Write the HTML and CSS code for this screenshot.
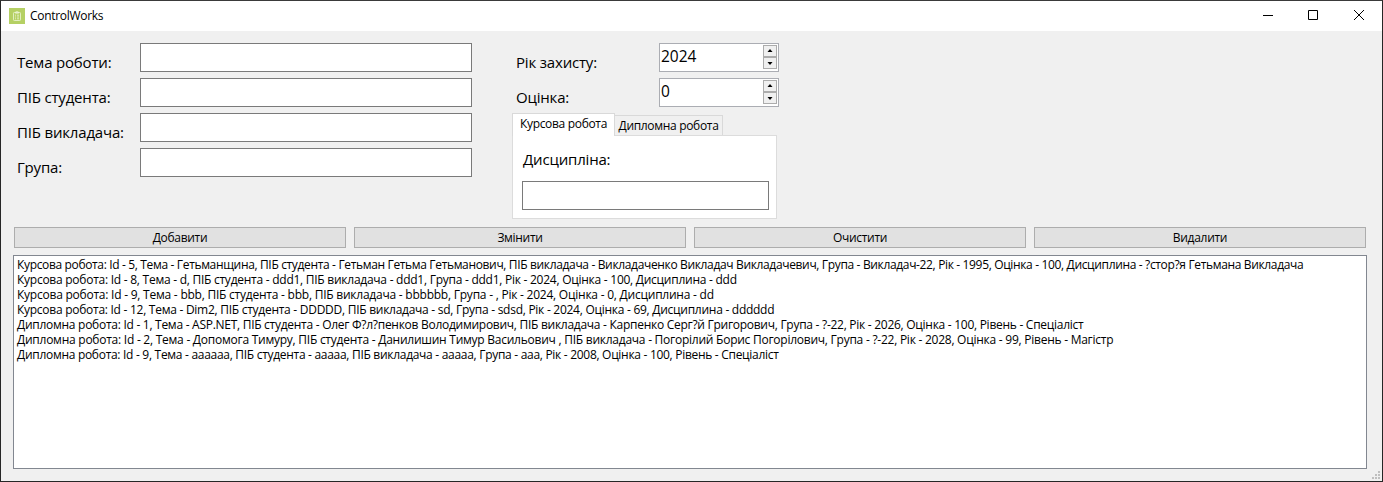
FILE: index.html
```html
<!DOCTYPE html>
<html lang="uk">
<head>
<meta charset="utf-8">
<title>ControlWorks</title>
<link rel="stylesheet" href="styles.css">
</head>
<body>
<div class="window">
  <header class="titlebar">
    <svg class="app-icon" width="16" height="16" viewBox="0 0 16 16" fill="none"><rect width="16" height="16" fill="#b5d064"/><rect x="4.5" y="4.5" width="7" height="8" rx=".8" stroke="#eef5d8" stroke-width=".8"/><path d="M6.5 5.2V4h.8l.7-.8.7.8h.8v1.2zM6 7.2h1M8 7.2h2M6 9h1M8 9h2M6 10.8h1M8 10.8h2" stroke="#eef5d8" stroke-width=".8"/></svg>
    <span class="title">ControlWorks</span>
    <svg class="window-controls" width="102" height="12" viewBox="0 0 102 12" fill="none" stroke="#000"><path d="M0 5.5h10M45.5.5h9v9h-9zM91 0l10 10M101 0L91 10"/></svg>
  </header>
  <main class="content">
    <section class="form">
      <div class="fields">
        <label class="field"><span class="label">Тема роботи:</span><input class="text-input"></label>
        <label class="field"><span class="label">ПІБ студента:</span><input class="text-input"></label>
        <label class="field"><span class="label">ПІБ викладача:</span><input class="text-input"></label>
        <label class="field"><span class="label">Група:</span><input class="text-input"></label>
      </div>
      <div class="details">
        <div class="field spin-field"><span class="label">Рік захисту:</span>
          <div class="spin"><span class="spin-value">2024</span><div class="spin-buttons"><svg class="spin-button" viewBox="0 0 12 10"><path d="M6 3l2.5 3h-5z"/></svg><svg class="spin-button" viewBox="0 0 12 10"><path d="M6 7l2.5-3h-5z"/></svg></div></div>
        </div>
        <div class="field spin-field"><span class="label">Оцінка:</span>
          <div class="spin"><span class="spin-value">0</span><div class="spin-buttons"><svg class="spin-button" viewBox="0 0 12 10"><path d="M6 3l2.5 3h-5z"/></svg><svg class="spin-button" viewBox="0 0 12 10"><path d="M6 7l2.5-3h-5z"/></svg></div></div>
        </div>
        <div class="tabs">
          <div class="tab-strip"><span class="tab active">Курсова робота</span><span class="tab">Дипломна робота</span></div>
          <div class="tab-panel"><span class="label">Дисципліна:</span><input class="text-input discipline"></div>
        </div>
      </div>
    </section>
    <div class="actions">
      <button class="action">Добавити</button><button class="action">Змінити</button><button class="action">Очистити</button><button class="action">Видалити</button>
    </div>
    <div class="list">
      <div class="row r1">Курсова робота: Id - 5, Тема - Гетьманщина, ПІБ студента - Гетьман Гетьма Гетьманович, ПІБ викладача - Викладаченко Викладач Викладачевич, Група - Викладач-22, Рік - 1995, Оцінка - 100, Дисциплина - ?стор?я Гетьмана Викладача</div>
      <div class="row r2">Курсова робота: Id - 8, Тема - d, ПІБ студента - ddd1, ПІБ викладача - ddd1, Група - ddd1, Рік - 2024, Оцінка - 100, Дисциплина - ddd</div>
      <div class="row r3">Курсова робота: Id - 9, Тема - bbb, ПІБ студента - bbb, ПІБ викладача - bbbbbb, Група - , Рік - 2024, Оцінка - 0, Дисциплина - dd</div>
      <div class="row r4">Курсова робота: Id - 12, Тема - Dim2, ПІБ студента - DDDDD, ПІБ викладача - sd, Група - sdsd, Рік - 2024, Оцінка - 69, Дисциплина - dddddd</div>
      <div class="row r5">Дипломна робота: Id - 1, Тема - ASP.NET, ПІБ студента - Олег Ф?л?пенков Володимирович, ПІБ викладача - Карпенко Серг?й Григорович, Група - ?-22, Рік - 2026, Оцінка - 100, Рівень - Спеціаліст</div>
      <div class="row r6">Дипломна робота: Id - 2, Тема - Допомога Тимуру, ПІБ студента - Данилишин Тимур Васильович , ПІБ викладача - Погорілий Борис Погорілович, Група - ?-22, Рік - 2028, Оцінка - 99, Рівень - Магістр</div>
      <div class="row r7">Дипломна робота: Id - 9, Тема - аааааа, ПІБ студента - ааааа, ПІБ викладача - ааааа, Група - ааа, Рік - 2008, Оцінка - 100, Рівень - Спеціаліст</div>
    </div>
  </main>
  <svg class="grip" width="8" height="8" fill="#bfbfbf"><path d="M6 0h2v2H6zM3 3h2v2H3zM6 3h2v2H6zM0 6h2v2H0zM3 6h2v2H3zM6 6h2v2H6z"/></svg>
</div>
</body>
</html>
```
FILE: styles.css
```css
* { box-sizing: border-box; }
body { margin: 0; font: 12px/15px "Open Sans", "Noto Sans", sans-serif; color: #000; }
.window { position: relative; width: 1383px; height: 482px; border: 1px solid #262626; border-top-color: #3a3a3a; background: #f0f0f0; overflow: hidden; }
.titlebar { display: flex; align-items: center; height: 30px; padding: 0 17px 0 8px; background: #fff; }
.title { margin: -1px 0 0 5px; letter-spacing: -0.3px; }
.window-controls { margin-left: auto; }
.content { padding: 12px 15px 0 12px; }
.form { display: flex; gap: 40px; height: 184px; }
.fields { display: flex; flex-direction: column; gap: 6px; }
.field { display: flex; height: 29px; }
.label { width: 123px; padding: 9px 0 0 4px; font-size: 15px; line-height: 20px; white-space: nowrap; letter-spacing: -0.18px; }
.text-input { width: 332px; height: 29px; margin: 0 0 0 4px; padding: 0 4px; border: 1px solid #7a7a7a; background: #fff; }
.spin-field { margin-bottom: 6px; }
.spin-field .label { width: 147px; }
.spin { display: flex; justify-content: space-between; width: 120px; height: 29px; padding: 1px 1px 0; border: 1px solid #abadb3; background: #fff; }
.spin-value { font-size: 15.5px; line-height: 22px; }
.spin-buttons { display: flex; flex-direction: column; width: 14px; }
.spin-button { width: 14px; height: 12px; border: 1px solid #acacac; background: #f0f0f0; }
.tab-strip { display: flex; align-items: flex-end; height: 22px; }
.tab { width: 108px; height: 20px; padding-top: 2px; border: 1px solid #d9d9d9; border-left: 0; border-bottom: 0; text-align: center; white-space: nowrap; letter-spacing: -0.32px; }
.tab.active { position: relative; width: 103px; height: 23px; margin-bottom: -1px; padding-top: 2px; border-left: 1px solid #d9d9d9; background: #fff; }
.tab-panel { width: 265px; height: 84px; padding: 7px 0 0 7px; border: 1px solid #dcdcdc; background: #fff; }
.tab-panel .label { display: block; height: 38px; padding: 6px 0 0 3px; }
.discipline { display: block; width: 247px; margin-left: 2px; }
.actions { display: flex; gap: 8px; padding-left: 1px; }
.action { width: 332px; height: 21px; padding: 0 0 1px; border: 1px solid #adadad; background: #e1e1e1; color: #000; font: inherit; letter-spacing: -0.3px; }
.list { width: 1354px; height: 214px; margin-top: 7px; padding: 1px 3px; border: 1px solid #828790; background: #fff; }
.row { width: max-content; height: 15px; white-space: nowrap; }
.r1 { letter-spacing: -0.347px; }
.r2 { letter-spacing: -0.256px; }
.r3 { letter-spacing: -0.233px; }
.r4 { letter-spacing: -0.268px; }
.r5 { letter-spacing: -0.274px; }
.r6 { letter-spacing: -0.249px; }
.r7 { letter-spacing: -0.294px; }
.grip { position: absolute; right: 2px; bottom: 2px; }
```
